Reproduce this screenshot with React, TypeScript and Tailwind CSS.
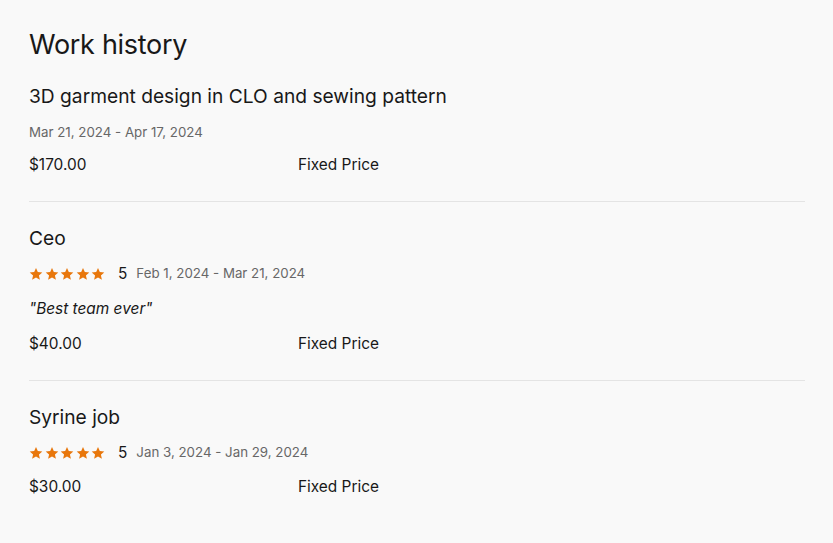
import React from 'react';

type Job = {
  title: string;
  dates: string;
  price: string;
  rating?: number;
  quote?: string;
};

const jobs: Job[] = [
  {
    title: '3D garment design in CLO and sewing pattern',
    dates: 'Mar 21, 2024 - Apr 17, 2024',
    price: '$170.00',
  },
  {
    title: 'Ceo',
    dates: 'Feb 1, 2024 - Mar 21, 2024',
    price: '$40.00',
    rating: 5,
    quote: '"Best team ever"',
  },
  {
    title: 'Syrine job',
    dates: 'Jan 3, 2024 - Jan 29, 2024',
    price: '$30.00',
    rating: 5,
  },
];

const Star = () => (
  <svg width="14" height="14" viewBox="0 0 24 24" fill="#e8770c">
    <path d="M12 1.5l3.1 7.1 7.7.7-5.8 5.1 1.7 7.6L12 18l-6.7 4 1.7-7.6L1.2 9.3l7.7-.7z" />
  </svg>
);

const JobRow: React.FC<{ job: Job; last: boolean }> = ({ job, last }) => (
  <div className={`pt-[22px] ${last ? '' : 'pb-[25px] border-b border-[#e4e4e4]'}`}>
    <h3 className="text-[19.2px] leading-[28px] text-[#181818]">{job.title}</h3>
    {job.rating ? (
      <div className="mt-[12px] flex items-center h-[20px]">
        <div className="flex gap-[1.5px]">
          {Array.from({ length: 5 }).map((_, i) => (
            <Star key={i} />
          ))}
        </div>
        <span className="ml-[13px] text-[15.4px] text-[#181818]">{job.rating}</span>
        <span className="ml-[9px] text-[13.3px] text-[#676767]">{job.dates}</span>
      </div>
    ) : (
      <div className="mt-[12px] text-[13.3px] leading-[20px] text-[#676767]">{job.dates}</div>
    )}
    {job.quote && (
      <p className="mt-[14px] text-[15.4px] leading-[22px] italic text-[#181818]">{job.quote}</p>
    )}
    <div
      className={`${job.rating ? 'mt-[13px]' : 'mt-[12px]'} grid grid-cols-[269px_1fr] text-[15.4px] leading-[22px] text-[#181818]`}
    >
      <span>{job.price}</span>
      <span>Fixed Price</span>
    </div>
  </div>
);

export default function App() {
  return (
    <div
      className="min-h-[543px] bg-[#f9f9f9] pt-[29px] pl-[29px] pr-[28px]"
      style={{ fontFamily: 'Inter, "Noto Sans", sans-serif' }}
    >
      <h2 className="text-[27px] leading-[31px] text-[#181818] tracking-[-0.3px]">Work history</h2>
      <div>
        {jobs.map((job, i) => (
          <JobRow key={job.title} job={job} last={i === jobs.length - 1} />
        ))}
      </div>
    </div>
  );
}
